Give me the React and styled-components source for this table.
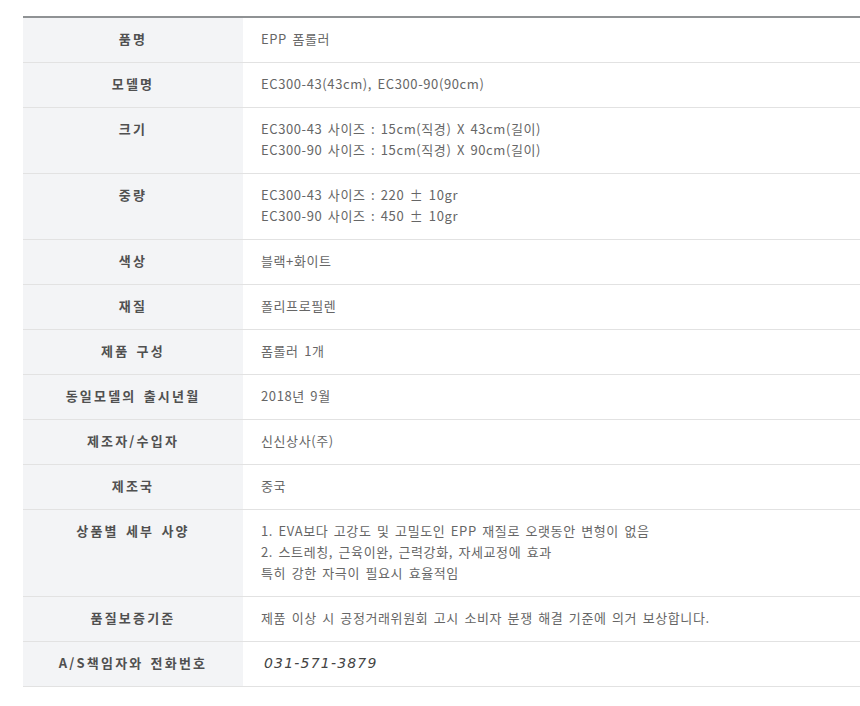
import React from "react";
import styled, { createGlobalStyle } from "styled-components";

const GlobalStyle = createGlobalStyle`
  html, body {
    margin: 0;
    padding: 0;
    background: #fff;
    overflow: hidden;
  }
  body {
    font-family: "Noto Sans CJK KR", "Noto Sans", sans-serif;
  }
`;

const Page = styled.div`
  padding: 16px 0 0 23px;
  box-sizing: border-box;
  width: 860px;
`;

const Table = styled.table`
  width: 100%;
  border-collapse: collapse;
  border-top: 2px solid #8f9294;
  font-size: 13px;
`;

const Row = styled.tr`
  border-bottom: 1px solid #e2e2e2;
`;

const Label = styled.th`
  width: 220px;
  padding: 10px 4px 13px;
  background: #f3f4f6;
  color: #505050;
  font-weight: bold;
  font-size: 13px;
  letter-spacing: 2.2px;
  word-spacing: 2px;
  line-height: 21px;
  text-align: center;
  vertical-align: top;
  box-sizing: border-box;
`;

const Value = styled.td`
  padding: 10px 18px 13px;
  color: #666;
  line-height: 21px;
  letter-spacing: 0.6px;
  word-spacing: 2px;
  vertical-align: top;
  font-weight: normal;
`;

const Phone = styled.span`
  display: inline-block;
  margin-left: 3px;
  margin-top: 2px;
  line-height: 19px;
  font-family: "DejaVu Sans", sans-serif;
  font-style: italic;
  font-size: 14px;
  letter-spacing: 1.2px;
  color: #444;
`;

const rows = [
  ["품명", ["EPP 폼롤러"]],
  ["모델명", ["EC300-43(43cm), EC300-90(90cm)"]],
  ["크기", ["EC300-43 사이즈 : 15cm(직경) X 43cm(길이)", "EC300-90 사이즈 : 15cm(직경) X 90cm(길이)"]],
  ["중량", ["EC300-43 사이즈 : 220 ± 10gr", "EC300-90 사이즈 : 450 ± 10gr"]],
  ["색상", ["블랙+화이트"]],
  ["재질", ["폴리프로필렌"]],
  ["제품 구성", ["폼롤러 1개"]],
  ["동일모델의 출시년월", ["2018년 9월"]],
  ["제조자/수입자", ["신신상사(주)"]],
  ["제조국", ["중국"]],
  ["상품별 세부 사양", [
    "1. EVA보다 고강도 및 고밀도인 EPP 재질로 오랫동안 변형이 없음",
    "2. 스트레칭, 근육이완, 근력강화, 자세교정에 효과",
    "특히 강한 자극이 필요시 효율적임",
  ]],
  ["품질보증기준", ["제품 이상 시 공정거래위원회 고시 소비자 분쟁 해결 기준에 의거 보상합니다."]],
];

export default function App() {
  return (
    <>
      <GlobalStyle />
      <Page>
        <Table>
          <tbody>
            {rows.map(([label, lines]) => (
              <Row key={label}>
                <Label>{label}</Label>
                <Value>
                  {lines.map((l, i) => (
                    <div key={i}>{l}</div>
                  ))}
                </Value>
              </Row>
            ))}
            <Row>
              <Label>A/S책임자와 전화번호</Label>
              <Value>
                <Phone>031-571-3879</Phone>
              </Value>
            </Row>
          </tbody>
        </Table>
      </Page>
    </>
  );
}
